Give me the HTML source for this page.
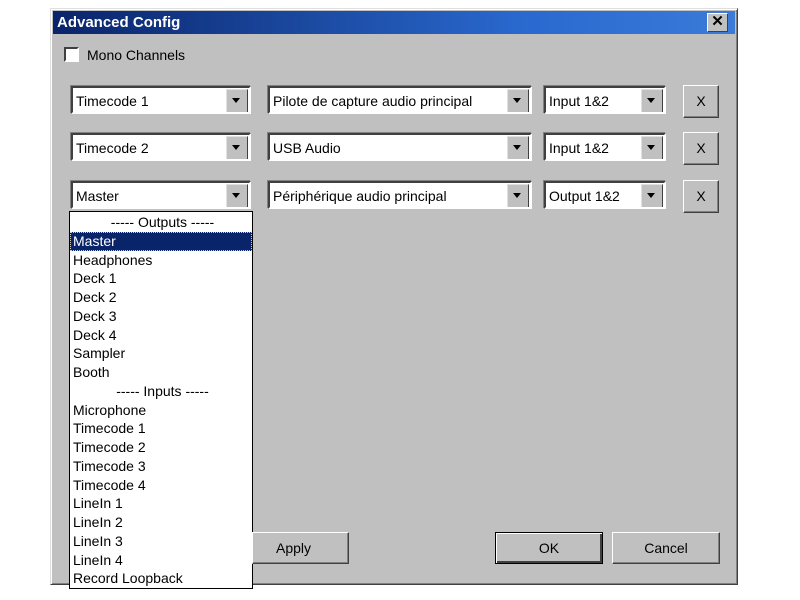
<!DOCTYPE html>
<html><head><style>
body{margin:0;width:800px;height:600px;background:#fff;position:relative;overflow:hidden;font-family:"Liberation Sans",sans-serif;font-size:14px;color:#000}
.a{position:absolute;box-sizing:border-box}
.dlg{left:50px;top:8px;width:688px;height:577px;background:#c0c0c0;border:1px solid;border-color:#dfdfdf #404040 #404040 #dfdfdf;box-shadow:inset 1px 1px #fff,inset -1px -1px #808080}
.title{left:53px;top:11px;width:682px;height:23px;background:linear-gradient(to right,#0a246a,#2a6ad0 70%,#3a7ad8);color:#fff;font-weight:bold;font-size:15px;line-height:23px;padding-left:4px}
.cls{left:707px;top:13px;width:21px;height:19px;background:#c0c0c0;border:1px solid;border-color:#fff #404040 #404040 #fff;font-weight:bold;font-size:15px;line-height:16px;text-align:center;color:#000}
.combo{background:#fff;border:2px solid;border-color:#404040 #fff #fff #404040;box-shadow:-1px -1px #808080;line-height:27px;padding-left:3px;white-space:nowrap;overflow:hidden}
.dd{position:absolute;right:1px;top:1px;width:20px;height:22px;background:#c0c0c0;border:1px solid;border-color:#e0e0e0 #404040 #404040 #e0e0e0}
.dd:after{content:"";position:absolute;left:5px;top:8px;border-left:4px solid transparent;border-right:4px solid transparent;border-top:5px solid #000}
.btn{background:#c0c0c0;border:1px solid;border-color:#fff #404040 #404040 #fff;box-shadow:inset -1px -1px #808080;text-align:center}
.list{left:69px;top:211px;width:184px;height:378px;background:#fff;border:1px solid #000;padding-top:1px}
.it{height:18.75px;line-height:19px;padding-left:3px;white-space:nowrap}
.sel{background:#0a246a;color:#fff;outline:1px dotted #ccc;outline-offset:-1px}
.c{text-align:center}
</style></head><body>
<div class="a dlg"></div>
<div class="a title">Advanced Config</div>
<div class="a cls">✕</div>
<div class="a" style="left:64px;top:47px;width:15px;height:15px;background:#fff;border:2px solid;border-color:#404040 #fff #fff #404040"></div>
<div class="a" style="left:87px;top:45px;line-height:20px">Mono Channels</div>

<div class="a combo" style="left:71px;top:86px;width:180px;height:28px">Timecode 1<div class="dd"></div></div>
<div class="a combo" style="left:268px;top:86px;width:264px;height:28px">Pilote de capture audio principal<div class="dd"></div></div>
<div class="a combo" style="left:544px;top:86px;width:122px;height:28px">Input 1&amp;2<div class="dd"></div></div>
<div class="a btn" style="left:683px;top:85px;width:36px;height:33px;line-height:31px">X</div>

<div class="a combo" style="left:71px;top:133px;width:180px;height:28px">Timecode 2<div class="dd"></div></div>
<div class="a combo" style="left:268px;top:133px;width:264px;height:28px">USB Audio<div class="dd"></div></div>
<div class="a combo" style="left:544px;top:133px;width:122px;height:28px">Input 1&amp;2<div class="dd"></div></div>
<div class="a btn" style="left:683px;top:132px;width:36px;height:33px;line-height:31px">X</div>

<div class="a combo" style="left:71px;top:181px;width:180px;height:28px">Master<div class="dd"></div></div>
<div class="a combo" style="left:268px;top:181px;width:264px;height:28px">Périphérique audio principal<div class="dd"></div></div>
<div class="a combo" style="left:544px;top:181px;width:122px;height:28px">Output 1&amp;2<div class="dd"></div></div>
<div class="a btn" style="left:683px;top:180px;width:36px;height:33px;line-height:31px">X</div>

<div class="a list">
<div class="it c">----- Outputs -----</div>
<div class="it sel">Master</div>
<div class="it">Headphones</div>
<div class="it">Deck 1</div>
<div class="it">Deck 2</div>
<div class="it">Deck 3</div>
<div class="it">Deck 4</div>
<div class="it">Sampler</div>
<div class="it">Booth</div>
<div class="it c">----- Inputs -----</div>
<div class="it">Microphone</div>
<div class="it">Timecode 1</div>
<div class="it">Timecode 2</div>
<div class="it">Timecode 3</div>
<div class="it">Timecode 4</div>
<div class="it">LineIn 1</div>
<div class="it">LineIn 2</div>
<div class="it">LineIn 3</div>
<div class="it">LineIn 4</div>
<div class="it">Record Loopback</div>
</div>

<div class="a btn" style="left:252px;top:532px;width:97px;height:32px;line-height:31px;text-align:left;padding-left:23px">Apply</div>
<div class="a btn" style="left:495px;top:532px;width:108px;height:32px;line-height:31px;border:1px solid #000;box-shadow:inset 1px 1px #fff,inset -2px -2px #404040">OK</div>
<div class="a btn" style="left:612px;top:532px;width:108px;height:32px;line-height:31px">Cancel</div>
</body></html>
